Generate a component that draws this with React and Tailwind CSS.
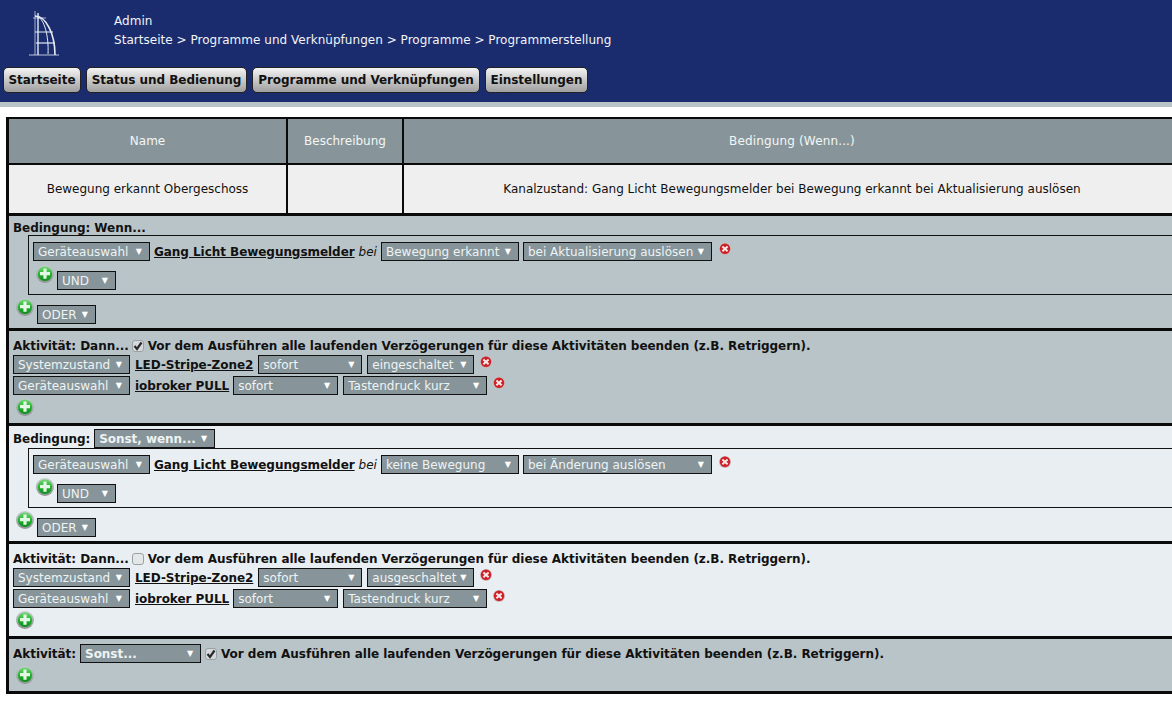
import React from 'react';

function Logo() {
  return (
    <svg width="60" height="52" viewBox="0 0 60 52" className="absolute left-[20px] top-[8px]" fill="none" stroke="#e6ebf5">
      <path d="M15 3V47" strokeWidth="1" opacity="0.7" />
      <path d="M18 5V47" strokeWidth="1.4" />
      <path d="M9 47H39" strokeWidth="1" opacity="0.8" />
      <path d="M15 8C26 8 35 26 35 47" strokeWidth="1.6" />
      <path d="M18 9C24 11 29 28 28 46" strokeWidth="1" />
      <path d="M13 10H26" strokeWidth="1" opacity="0.7" />
      <path d="M15 24H33" strokeWidth="1" />
      <path d="M16 35H35" strokeWidth="1.2" />
    </svg>
  );
}

function PlusIcon() {
  return (
    <svg width="18" height="18" viewBox="0 0 18 18" className="shrink-0">
      <defs>
        <linearGradient id="plusGreen" x1="0" y1="0" x2="0" y2="1">
          <stop offset="0" stopColor="#6fd872" />
          <stop offset="0.5" stopColor="#22b52f" />
          <stop offset="1" stopColor="#0f8a1e" />
        </linearGradient>
        <linearGradient id="plusRing" x1="0" y1="0" x2="0" y2="1">
          <stop offset="0" stopColor="#c4cdcb" />
          <stop offset="1" stopColor="#8b9693" />
        </linearGradient>
      </defs>
      <circle cx="9" cy="9" r="9" fill="url(#plusRing)" />
      <circle cx="9" cy="8.8" r="7.2" fill="url(#plusGreen)" />
      <path d="M7.4 3.6H10.6V7.1H14V10.3H10.6V13.8H7.4V10.3H4V7.1H7.4Z" fill="#e4f6e4" />
    </svg>
  );
}

function RemoveIcon() {
  return (
    <svg width="12" height="12" viewBox="0 0 12 12" className="shrink-0">
      <circle cx="6" cy="6" r="6" fill="#c9b4b4" />
      <circle cx="6" cy="5.7" r="5.2" fill="#cf1f26" />
      <path d="M3.4 3.4L8.6 8.2M8.6 3.4L3.4 8.2" stroke="#f7e9e9" strokeWidth="2" />
    </svg>
  );
}

function Select({ label, width, bold }) {
  return (
    <div
      className={`h-[19px] shrink-0 flex items-center justify-between pl-[4px] pr-[7px] border border-[#111] bg-[#87959a] text-[#eef3f3] text-[12px] leading-none ${width} ${bold ? 'font-bold' : ''}`}
    >
      <span className="whitespace-nowrap">{label}</span>
      <span className="text-[8px] text-white">▼</span>
    </div>
  );
}

function Device({ children, tight }) {
  return (
    <a className={`font-bold underline text-[#111] text-[12px] tracking-[-0.05px] whitespace-nowrap ${tight ? '-mr-[1px]' : ''}`}>
      {children}
    </a>
  );
}

function Check({ checked }) {
  return (
    <span className={`w-[12px] h-[12px] shrink-0 rounded-[3px] border border-[#9aa0a3] flex items-center justify-center ${checked ? 'bg-[#d5d9db]' : 'bg-[#e4e7e8]'}`}>
      {checked && (
        <svg width="10" height="10" viewBox="0 0 10 10" fill="none">
          <path d="M1.5 5L4 8L8.5 1.5" stroke="#2a2a2a" strokeWidth="2.2" />
        </svg>
      )}
    </span>
  );
}

const RETRIGGER = 'Vor dem Ausführen alle laufenden Verzögerungen für diese Aktivitäten beenden (z.B. Retriggern).';

function ConditionBox({ value, trigger }) {
  return (
    <>
      <div className="ml-[19px] border border-[#111] border-r-0 h-[60px] pt-[6px] pl-[4px]">
        <div className="flex items-center gap-[4px]">
          <Select label="Geräteauswahl" width="w-[117px]" />
          <Device>Gang Licht Bewegungsmelder</Device>
          <span className="italic text-[12px]">bei</span>
          <Select label={value} width="w-[138px]" />
          <Select label={trigger} width="w-[189px]" />
          <div className="ml-[3px] -mt-[6px]"><RemoveIcon /></div>
        </div>
        <div className="flex items-start gap-[3px] mt-[4px] ml-[3px]">
          <PlusIcon />
          <div className="mt-[6px]"><Select label="UND" width="w-[59px]" /></div>
        </div>
      </div>
      <div className="flex items-start gap-[3px] mt-[3px] ml-[7px]">
        <PlusIcon />
        <div className="mt-[7px]"><Select label="ODER" width="w-[59px]" /></div>
      </div>
    </>
  );
}

function ActivityRow({ first, device, tight, whenWidth, action, actionWidth }) {
  return (
    <div className="flex items-center gap-[5px] h-[19px] mb-[2px] ml-[4px]">
      <Select label={first} width="w-[117px]" />
      <Device tight={tight}>{device}</Device>
      <Select label="sofort" width={whenWidth} />
      <Select label={action} width={actionWidth} />
      <div className="ml-[1px] -mt-[6px]"><RemoveIcon /></div>
    </div>
  );
}

function Activity({ checked, state, bg }) {
  return (
    <section className={`h-[92px] pt-[5px] ${bg}`}>
      <div className="flex items-center gap-[4px] h-[19px] ml-[4px] font-bold text-[12px] text-[#111] whitespace-nowrap tracking-[-0.04px]">
        <span className="-mr-[1px]">Aktivität: Dann...</span>
        <Check checked={checked} />
        <span>{RETRIGGER}</span>
      </div>
      <ActivityRow first="Systemzustand" device="LED-Stripe-Zone2" whenWidth="w-[104px]" action={state} actionWidth="w-[107px]" />
      <ActivityRow first="Geräteauswahl" device="iobroker PULL" tight whenWidth="w-[105px]" action="Tastendruck kurz" actionWidth="w-[144px]" />
      <div className="ml-[7px] mt-[3px]"><PlusIcon /></div>
    </section>
  );
}

const NAV = [
  ['Startseite', 'w-[78px]'],
  ['Status und Bedienung', 'w-[161px]'],
  ['Programme und Verknüpfungen', 'w-[228px]'],
  ['Einstellungen', 'w-[103px]'],
];

export default function App() {
  return (
    <div className="w-[1172px] h-[703px] overflow-hidden bg-white text-[12px] text-[#111] font-['DejaVu_Sans','Liberation_Sans',sans-serif]">
      <header className="relative h-[107px] bg-[#1a2c6e] border-b-[5px] border-[#b9c4c9]">
        <Logo />
        <div className="pl-[114px] pt-[12px] text-[#f2f4f8] leading-[19px] tracking-[0.03px]">
          <div>Admin</div>
          <div>Startseite &gt; Programme und Verknüpfungen &gt; Programme &gt; Programmerstellung</div>
        </div>
        <nav className="flex gap-[5px] pl-[3px] pt-[17px]">
          {NAV.map(([t, w]) => (
            <button key={t} className={`h-[26px] rounded-[5px] border border-[#222] bg-gradient-to-b from-[#f4f4f4] to-[#a0a0a0] font-bold text-[12px] text-[#111] tracking-[-0.04px] whitespace-nowrap ${w}`}>
              {t}
            </button>
          ))}
        </nav>
      </header>

      <main className="ml-[6px] mt-[10px] w-[1177px] border-[3px] border-[#0a0a0a] border-t-2">
        <div className="grid grid-cols-[277px_114px_1fr] gap-x-[2px] bg-[#0a0a0a] border-b-2 border-[#0a0a0a]">
          <div className="h-[44px] flex items-center justify-center bg-[#87959a] text-[#f4f6f6]">Name</div>
          <div className="flex items-center justify-center bg-[#87959a] text-[#f4f6f6]">Beschreibung</div>
          <div className="flex items-center justify-center bg-[#87959a] text-[#f4f6f6] tracking-[0.15px]">Bedingung (Wenn...)</div>
        </div>
        <div className="grid grid-cols-[277px_114px_1fr] gap-x-[2px] bg-[#0a0a0a] border-b-[3px] border-[#0a0a0a]">
          <div className="h-[48px] flex items-center justify-center bg-[#efefef] pb-[1px]">Bewegung erkannt Obergeschoss</div>
          <div className="bg-[#efefef]" />
          <div className="flex items-center justify-center bg-[#efefef] pb-[1px]">
            Kanalzustand: Gang Licht Bewegungsmelder bei Bewegung erkannt bei Aktualisierung auslösen
          </div>
        </div>

        <div className="flex flex-col gap-y-[3px] bg-[#0a0a0a]">
          <section className="h-[112px] bg-[#b9c4c9] pt-[5px]">
            <div className="h-[14px] leading-[14px] ml-[4px] font-bold tracking-[-0.04px]">Bedingung: Wenn...</div>
            <ConditionBox value="Bewegung erkannt" trigger="bei Aktualisierung auslösen" />
          </section>

          <Activity checked state="eingeschaltet" bg="bg-[#b9c4c9]" />

          <section className="h-[115px] bg-[#e9eef2] pt-[3px]">
            <div className="flex items-center gap-[4px] h-[19px] ml-[4px] font-bold tracking-[-0.04px]">
              <span>Bedingung:</span>
              <Select label="Sonst, wenn..." width="w-[121px]" bold />
            </div>
            <ConditionBox value="keine Bewegung" trigger="bei Änderung auslösen" />
          </section>

          <Activity checked={false} state="ausgeschaltet" bg="bg-[#e9eef2]" />

          <section className="h-[52px] bg-[#b9c4c9] pt-[5px]">
            <div className="flex items-center gap-[4px] h-[19px] ml-[4px] font-bold whitespace-nowrap tracking-[-0.04px]">
              <span>Aktivität:</span>
              <Select label="Sonst..." width="w-[121px]" bold />
              <Check checked />
              <span>{RETRIGGER}</span>
            </div>
            <div className="ml-[7px] mt-[3px]"><PlusIcon /></div>
          </section>
        </div>
      </main>
    </div>
  );
}
